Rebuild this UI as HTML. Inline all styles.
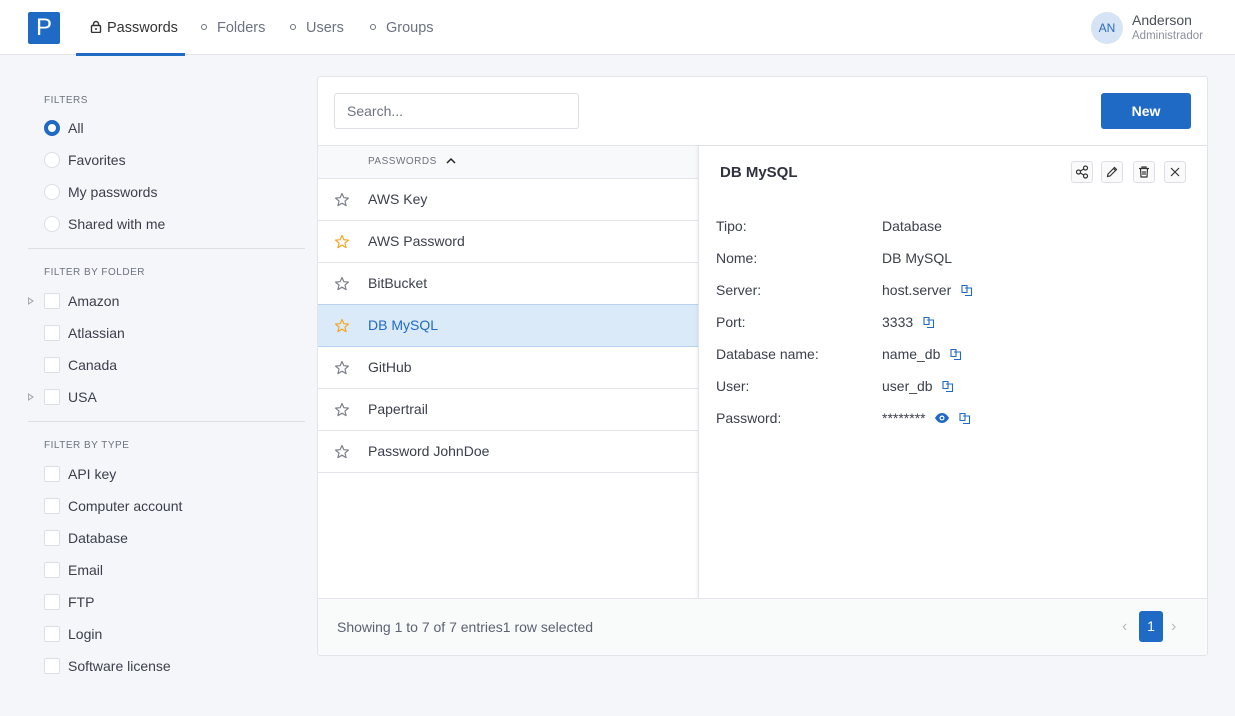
<!DOCTYPE html>
<html><head><meta charset="utf-8"><style>
*{box-sizing:border-box;margin:0;padding:0}
body{width:1235px;height:716px;background:#f5f6fa;font-family:"Liberation Sans",sans-serif;color:#3b3f4c;font-size:14px;position:relative;overflow:hidden}
.a{position:absolute;white-space:nowrap}
.top{position:absolute;left:0;top:0;width:1235px;height:55px;background:#fff;border-bottom:1px solid #e3e5ea}
.logo{left:28px;top:12px;width:32px;height:32px;background:#1f6ac4;border-radius:2px;color:#fff;font-size:24px;text-align:center;line-height:32px}
.nav{top:20px;font-size:14.5px;color:#6c7280}
.dot{display:inline-block;width:6px;height:6px;border:1.3px solid #6c7280;border-radius:50%;margin-right:10px;vertical-align:2px}
.hdr{font-size:10px;color:#6c7280;letter-spacing:.5px;left:44px}
.it{left:44px;font-size:14px;height:18px;line-height:18px}
.it i{display:inline-block;width:16px;height:16px;border:1px solid #dcdfe4;background:#fff;vertical-align:-3px;margin-right:8px}
.rd i{border-radius:50%}
.ck i{border-radius:2px}
.hr{left:28px;width:277px;height:1px;background:#dcdfe4}
.tri{left:28px;width:0;height:0;border-left:6px solid #aaa;border-top:4px solid transparent;border-bottom:4px solid transparent}
.tri:after{content:"";position:absolute;left:-5px;top:-2.5px;border-left:3.5px solid #f5f6fa;border-top:2.5px solid transparent;border-bottom:2.5px solid transparent}
.card{left:317px;top:76px;width:891px;height:580px;background:#fff;border:1px solid #e3e5ea;border-radius:3px}
.row{left:318px;width:380px;height:42px;border-bottom:1px solid #e3e5ea}
.row span{position:absolute;left:50px;top:12px;font-size:14px}
.row svg{position:absolute;left:16px;top:13px}
.lbl{left:716px}
.val{left:882px}
.btn{top:161px;width:22px;height:22px;border:1px solid #dcdfe4;border-radius:3px;background:#fafafa}
.btn svg{position:absolute;left:3px;top:3px}
</style></head><body>
<div class="top"></div>
<div class="a logo">P</div>
<div class="a nav" style="left:90px;color:#333">
<svg width="12" height="13" viewBox="0 0 12 13" style="vertical-align:-1px;margin-right:5px"><rect x="1.5" y="5.5" width="9" height="7" rx="1" fill="none" stroke="#333" stroke-width="1.4"/><path d="M3.5 5.5V4a2.5 2.5 0 0 1 5 0v1.5" fill="none" stroke="#333" stroke-width="1.4"/><circle cx="6" cy="9" r="1" fill="#333"/></svg>Passwords</div>
<div class="a" style="left:76px;top:53px;width:109px;height:3px;background:#1f6ac4"></div>
<div class="a nav" style="left:201px"><span class="dot"></span>Folders</div>
<div class="a nav" style="left:290px"><span class="dot"></span>Users</div>
<div class="a nav" style="left:370px"><span class="dot"></span>Groups</div>
<div class="a" style="left:1091px;top:12px;width:32px;height:32px;border-radius:50%;background:#d6e4f5;color:#2d6bbd;font-size:12px;text-align:center;line-height:32px">AN</div>
<div class="a" style="left:1132px;top:12px;font-size:14px;color:#4a4f5c">Anderson</div>
<div class="a" style="left:1132px;top:30px;font-size:11.5px;color:#8a909c">Administrador</div>

<div class="a hdr" style="top:95px">FILTERS</div>
<div class="a it rd" style="top:119px"><i style="border:4.5px solid #1f6ac4"></i>All</div>
<div class="a it rd" style="top:151px"><i></i>Favorites</div>
<div class="a it rd" style="top:183px"><i></i>My passwords</div>
<div class="a it rd" style="top:215px"><i></i>Shared with me</div>
<div class="a hr" style="top:248px"></div>
<div class="a hdr" style="top:267px">FILTER BY FOLDER</div>
<div class="a tri" style="top:297px"></div>
<div class="a it ck" style="top:292px"><i></i>Amazon</div>
<div class="a it ck" style="top:324px"><i></i>Atlassian</div>
<div class="a it ck" style="top:356px"><i></i>Canada</div>
<div class="a tri" style="top:393px"></div>
<div class="a it ck" style="top:388px"><i></i>USA</div>
<div class="a hr" style="top:421px"></div>
<div class="a hdr" style="top:440px">FILTER BY TYPE</div>
<div class="a it ck" style="top:465px"><i></i>API key</div>
<div class="a it ck" style="top:497px"><i></i>Computer account</div>
<div class="a it ck" style="top:529px"><i></i>Database</div>
<div class="a it ck" style="top:561px"><i></i>Email</div>
<div class="a it ck" style="top:593px"><i></i>FTP</div>
<div class="a it ck" style="top:625px"><i></i>Login</div>
<div class="a it ck" style="top:657px"><i></i>Software license</div>

<div class="a card"></div>
<div class="a" style="left:334px;top:93px;width:245px;height:36px;border:1px solid #dcdfe4;border-radius:3px;padding:9px 12px;color:#6c7280;font-size:14px">Search...</div>
<div class="a" style="left:1101px;top:93px;width:90px;height:36px;background:#1f6ac4;border-radius:3px;color:#fff;font-weight:bold;font-size:14px;text-align:center;line-height:36px">New</div>
<div class="a" style="left:318px;top:145px;width:889px;height:1px;background:#e3e5ea"></div>
<div class="a" style="left:318px;top:146px;width:889px;height:33px;background:#f8f9fa;border-bottom:1px solid #e3e5ea"></div>
<div class="a" style="left:368px;top:156px;font-size:10px;color:#6c7280;letter-spacing:.5px">PASSWORDS <svg width="10" height="7" viewBox="0 0 10 7" style="margin-left:6px"><path d="M1 6l4-4 4 4" fill="none" stroke="#222" stroke-width="1.5"/></svg></div>

<div class="a row" style="top:179px"><svg width="16" height="16" viewBox="0 0 16 16"><path d="M8 1.5l1.9 4.2 4.6.4-3.5 3 1.1 4.5L8 11.2l-4.1 2.4L5 9.1l-3.5-3 4.6-.4z" fill="none" stroke="#7a7f8a" stroke-width="1.2" stroke-linejoin="round"/></svg><span>AWS Key</span></div>
<div class="a row" style="top:221px"><svg width="16" height="16" viewBox="0 0 16 16"><path d="M8 1.5l1.9 4.2 4.6.4-3.5 3 1.1 4.5L8 11.2l-4.1 2.4L5 9.1l-3.5-3 4.6-.4z" fill="none" stroke="#f5a623" stroke-width="1.2" stroke-linejoin="round"/></svg><span>AWS Password</span></div>
<div class="a row" style="top:263px"><svg width="16" height="16" viewBox="0 0 16 16"><path d="M8 1.5l1.9 4.2 4.6.4-3.5 3 1.1 4.5L8 11.2l-4.1 2.4L5 9.1l-3.5-3 4.6-.4z" fill="none" stroke="#7a7f8a" stroke-width="1.2" stroke-linejoin="round"/></svg><span>BitBucket</span></div>
<div class="a" style="left:318px;top:304px;width:889px;height:43px;background:#dbeaf8;border-top:1px solid #b9d3ee;border-bottom:1px solid #b9d3ee"></div>
<div class="a row" style="top:305px;border:0"><svg width="16" height="16" viewBox="0 0 16 16"><path d="M8 1.5l1.9 4.2 4.6.4-3.5 3 1.1 4.5L8 11.2l-4.1 2.4L5 9.1l-3.5-3 4.6-.4z" fill="none" stroke="#f5a623" stroke-width="1.2" stroke-linejoin="round"/></svg><span style="color:#1f6ac4">DB MySQL</span></div>
<div class="a row" style="top:347px"><svg width="16" height="16" viewBox="0 0 16 16"><path d="M8 1.5l1.9 4.2 4.6.4-3.5 3 1.1 4.5L8 11.2l-4.1 2.4L5 9.1l-3.5-3 4.6-.4z" fill="none" stroke="#7a7f8a" stroke-width="1.2" stroke-linejoin="round"/></svg><span>GitHub</span></div>
<div class="a row" style="top:389px"><svg width="16" height="16" viewBox="0 0 16 16"><path d="M8 1.5l1.9 4.2 4.6.4-3.5 3 1.1 4.5L8 11.2l-4.1 2.4L5 9.1l-3.5-3 4.6-.4z" fill="none" stroke="#7a7f8a" stroke-width="1.2" stroke-linejoin="round"/></svg><span>Papertrail</span></div>
<div class="a row" style="top:431px"><svg width="16" height="16" viewBox="0 0 16 16"><path d="M8 1.5l1.9 4.2 4.6.4-3.5 3 1.1 4.5L8 11.2l-4.1 2.4L5 9.1l-3.5-3 4.6-.4z" fill="none" stroke="#7a7f8a" stroke-width="1.2" stroke-linejoin="round"/></svg><span>Password JohnDoe</span></div>

<div class="a" style="left:698px;top:146px;width:509px;height:452px;background:#fff;border-left:1px solid #e3e5ea;box-shadow:-1px 0 3px rgba(0,0,0,.06)"></div>
<div class="a" style="left:720px;top:164px;font-size:15px;font-weight:bold;color:#2f3340">DB MySQL</div>
<div class="a btn" style="left:1071px"><svg width="14" height="14" viewBox="0 0 14 14" fill="none" stroke="#333" stroke-width="1.2"><circle cx="3.5" cy="7" r="2"/><circle cx="10.5" cy="3" r="2"/><circle cx="10.5" cy="11" r="2"/><path d="M5.3 6l3.4-2M5.3 8l3.4 2"/></svg></div>
<div class="a btn" style="left:1101px"><svg width="14" height="14" viewBox="0 0 14 14" fill="none" stroke="#333" stroke-width="1.2"><path d="M2.5 11.5l.5-2.5 6.5-6.5 2 2-6.5 6.5zM8.5 3.5l2 2"/></svg></div>
<div class="a btn" style="left:1133px"><svg width="14" height="14" viewBox="0 0 14 14" fill="none" stroke="#333" stroke-width="1.2"><path d="M2 3.5h10M5 3.5V2h4v1.5M3.5 3.5l.5 8.5h6l.5-8.5M6 6v4M8 6v4"/></svg></div>
<div class="a btn" style="left:1164px"><svg width="14" height="14" viewBox="0 0 14 14" fill="none" stroke="#333" stroke-width="1.2"><path d="M3 3l8 8M11 3l-8 8"/></svg></div>

<div class="a lbl" style="top:218px">Tipo:</div><div class="a val" style="top:218px">Database</div>
<div class="a lbl" style="top:250px">Nome:</div><div class="a val" style="top:250px">DB MySQL</div>
<div class="a lbl" style="top:282px">Server:</div><div class="a val" style="top:282px">host.server <svg width="14" height="14" viewBox="0 0 14 14" fill="none" stroke="#1f6ac4" stroke-width="1.1" style="margin-left:5px;vertical-align:-2px"><path d="M2 2.5h5v7H2zM5 5h6.5v7.5H5"/></svg></div>
<div class="a lbl" style="top:314px">Port:</div><div class="a val" style="top:314px">3333 <svg width="14" height="14" viewBox="0 0 14 14" fill="none" stroke="#1f6ac4" stroke-width="1.1" style="margin-left:5px;vertical-align:-2px"><path d="M2 2.5h5v7H2zM5 5h6.5v7.5H5"/></svg></div>
<div class="a lbl" style="top:346px">Database name:</div><div class="a val" style="top:346px">name_db <svg width="14" height="14" viewBox="0 0 14 14" fill="none" stroke="#1f6ac4" stroke-width="1.1" style="margin-left:5px;vertical-align:-2px"><path d="M2 2.5h5v7H2zM5 5h6.5v7.5H5"/></svg></div>
<div class="a lbl" style="top:378px">User:</div><div class="a val" style="top:378px">user_db <svg width="14" height="14" viewBox="0 0 14 14" fill="none" stroke="#1f6ac4" stroke-width="1.1" style="margin-left:5px;vertical-align:-2px"><path d="M2 2.5h5v7H2zM5 5h6.5v7.5H5"/></svg></div>
<div class="a lbl" style="top:410px">Password:</div><div class="a val" style="top:410px">******** <svg width="16" height="12" viewBox="0 0 16 12" style="margin-left:5px;vertical-align:-1px"><path d="M1 6c2-3.5 4.5-5 7-5s5 1.5 7 5c-2 3.5-4.5 5-7 5S3 9.5 1 6z" fill="#1f6ac4"/><circle cx="8" cy="6" r="2.5" fill="#fff"/><circle cx="8" cy="6" r="1.3" fill="#1f6ac4"/></svg> <svg width="14" height="14" viewBox="0 0 14 14" fill="none" stroke="#1f6ac4" stroke-width="1.1" style="margin-left:4px;vertical-align:-2px"><path d="M2 2.5h5v7H2zM5 5h6.5v7.5H5"/></svg></div>

<div class="a" style="left:318px;top:598px;width:889px;height:57px;background:#f9fafa;border-top:1px solid #e3e5ea;border-radius:0 0 3px 3px"></div>
<div class="a" style="left:337px;top:619px;color:#5c6270;font-size:14px">Showing 1 to 7 of 7 entries1 row selected</div>
<div class="a" style="left:1122px;top:618px;color:#bbb;font-size:16px">‹</div>
<div class="a" style="left:1139px;top:611px;width:24px;height:31px;background:#1f6ac4;border-radius:3px;color:#fff;text-align:center;line-height:31px;font-size:14px">1</div>
<div class="a" style="left:1171px;top:618px;color:#bbb;font-size:16px">›</div>
</body></html>
